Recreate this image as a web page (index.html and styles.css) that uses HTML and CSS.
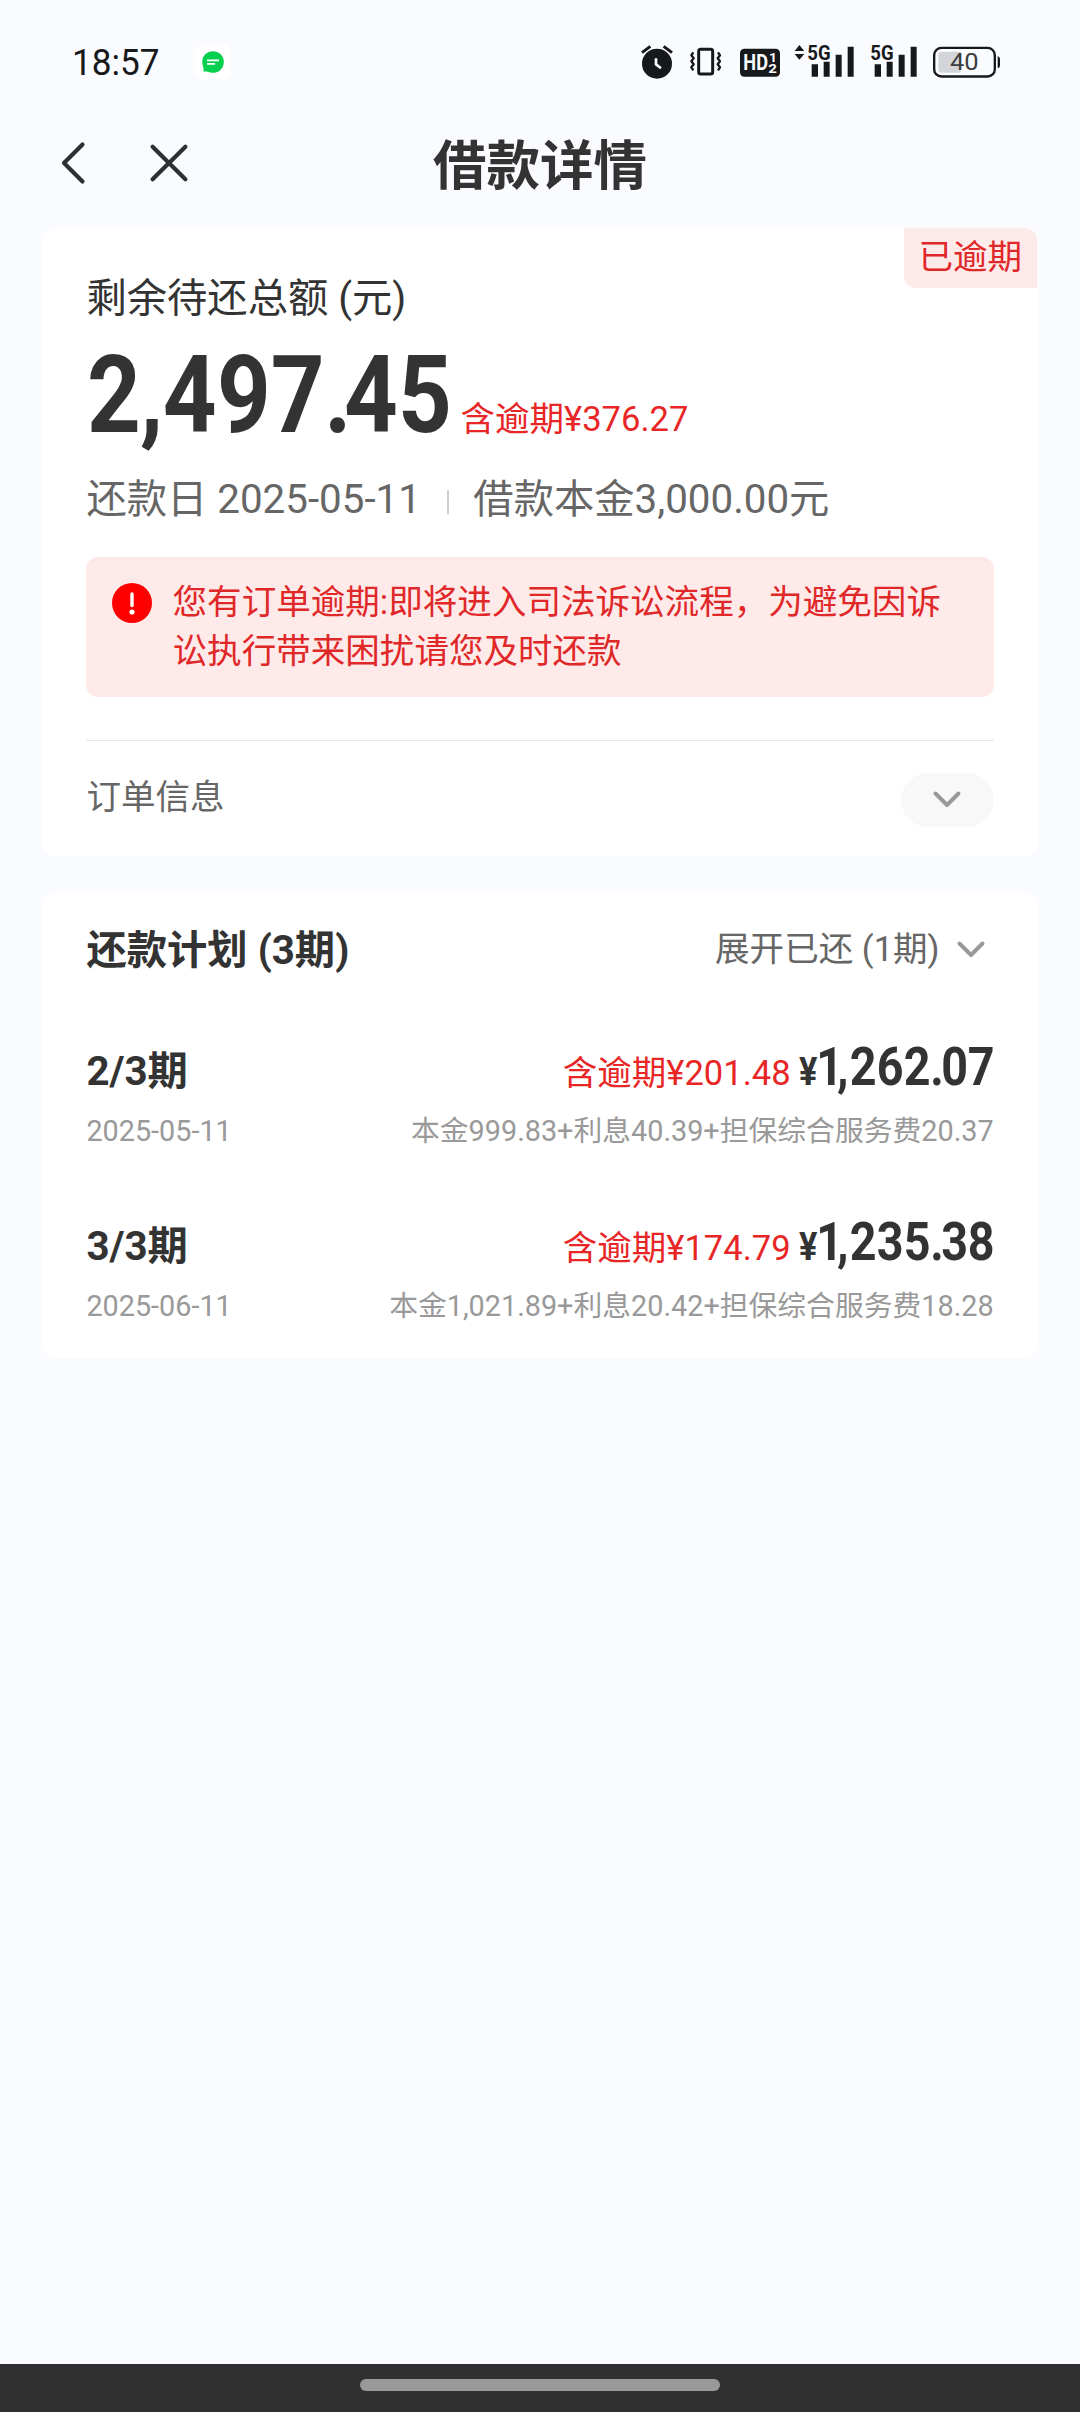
FILE: index.html
```html
<!DOCTYPE html>
<html lang="zh-CN">
<head>
<meta charset="utf-8">
<title>借款详情</title>
<link rel="stylesheet" href="styles.css">
</head>
<body>
<div class="screen">
  <header class="status-bar">
    <svg class="clock" viewBox="0 0 90 36"><text x="0" y="31" textLength="87.500" lengthAdjust="spacingAndGlyphs">18:57</text></svg>
    <svg class="chat" viewBox="0 0 36 36">
      <rect x="0.5" y="0.5" width="35" height="35" rx="6" fill="#fff"/>
      <circle cx="18" cy="18" r="10.800" fill="#08d04f"/>
      <path d="M8.500 19v8.500h9z" fill="#08d04f"/>
      <path d="M12 16.300h12M12 19.800h8" stroke="#fff" stroke-width="1.800"/>
    </svg>
    <div class="status-icons">
      <svg class="ic-alarm" viewBox="60 70 102 110">
        <circle cx="111" cy="132" r="45"/>
        <path d="M66 99l25-19M156 99l-25-19" class="line8"/>
        <path d="M108 116v18l15 12" class="cut"/>
      </svg>
      <svg class="ic-vibrate" viewBox="207 70 99 110">
        <rect x="236" y="89" width="42" height="74" rx="6" class="line9"/>
        <path d="M220 98l-6 9 7 9-7 9 7 9-7 9 6 9M294 98l6 9-7 9 7 9-7 9 7 9-6 9" class="line7"/>
      </svg>
      <svg class="ic-hd" viewBox="360 70 120 110">
        <rect x="360" y="87" width="120" height="84" rx="13"/>
        <text x="370" y="152" font-size="66" textLength="74" lengthAdjust="spacingAndGlyphs" class="light">HD</text>
        <text x="447" y="126" font-size="38" textLength="24" lengthAdjust="spacingAndGlyphs" class="light">1</text>
        <text x="445" y="161" font-size="40" textLength="26" lengthAdjust="spacingAndGlyphs" class="light">2</text>
      </svg>
      <svg class="ic-signal-a" viewBox="522 70 183 110">
        <path d="M524 94l14-18 15 18zM524 103l14 17 15-17z"/>
        <text x="562" y="120" font-size="62" textLength="70" lengthAdjust="spacingAndGlyphs">5G</text>
        <path d="M575 134h19v37h-19zM611 126h18v45h-18zM647 105h18v66h-18zM683 81h18v90h-18z"/>
      </svg>
      <svg class="ic-signal-b" viewBox="750 70 144 110">
        <text x="751" y="120" font-size="62" textLength="70" lengthAdjust="spacingAndGlyphs">5G</text>
        <path d="M764 134h19v37h-19zM800 126h18v45h-18zM836 105h18v66h-18zM872 81h18v90h-18z"/>
      </svg>
      <svg class="ic-battery" viewBox="936 70 207 110">
        <path d="M1022 96v63h-56q-11 0-11-11v-41q0-11 11-11z" fill="#d4d5d8"/>
        <rect x="942.500" y="84.500" width="182" height="86" rx="22" fill="none" stroke="#17181a" stroke-width="7"/>
        <path d="M1133 109q7 3 7 9v20q0 6-7 8z"/>
        <text x="990" y="152" font-size="72" textLength="86" lengthAdjust="spacingAndGlyphs" class="level">40</text>
      </svg>
    </div>
  </header>

  <nav class="nav-bar">
    <svg class="nav-back" viewBox="0 0 26 46"><path d="M21.500 4.500L3 23l18.500 18.500"/></svg>
    <svg class="nav-close" viewBox="0 0 38 38"><path d="M2.600 2.800l32.800 32.400M35.400 2.800L2.600 35.200"/></svg>
    <h1 class="nav-title">借款详情</h1>
  </nav>

  <main class="content">
    <section class="card summary">
      <span class="tag">已逾期</span>
      <div class="label">剩余待还总额 (元)</div>
      <div class="total">
        <svg class="total-value" width="374" height="103"><text transform="translate(1 104) scale(.877 1)" font-size="107" x="0 60.500 86.500 148.300 209.500 270.500 293 354.500">2,497.45</text></svg>
        <span class="overdue">含逾期¥376.27</span>
      </div>
      <div class="meta"><span>还款日 2025-05-11</span><i class="sep"></i><span>借款本金3,000.00元</span></div>
      <div class="notice">
        <svg class="notice-icon" viewBox="0 0 40 40"><circle cx="20" cy="20" r="20"/><path d="M20 11v11.500"/><circle cx="20" cy="29" r="2.600" class="dot"/></svg>
        <p>您有订单逾期:即将进入司法诉讼流程，为避免因诉<br>讼执行带来困扰请您及时还款</p>
      </div>
      <div class="order">
        <span>订单信息</span>
        <span class="pill"><svg class="chevron" viewBox="0 0 28 18"><path d="M2.500 2.500L14 14l11.500-11.500"/></svg></span>
      </div>
    </section>

    <section class="card plan">
      <div class="plan-head">
        <h2>还款计划 (3期)</h2>
        <span class="expand">展开已还 (1期)<svg class="chevron" viewBox="0 0 28 18"><path d="M2.500 2.500L14 14l11.500-11.500"/></svg></span>
      </div>
      <div class="item">
        <div class="row main"><strong>2/3期</strong><span class="overdue">含逾期¥201.48</span><svg class="price" width="196" height="40"><text transform="translate(1 40) scale(.88 1)" font-size="39">¥</text><text transform="translate(-1.500 40) scale(.88 1)" font-size="53" x="22.500 46 60.500 91.200 122 152 164.500 194.500">1,262.07</text></svg></div>
        <div class="row sub"><span>2025-05-11</span><span>本金999.83+利息40.39+担保综合服务费20.37</span></div>
      </div>
      <div class="item">
        <div class="row main"><strong>3/3期</strong><span class="overdue">含逾期¥174.79</span><svg class="price" width="196" height="40"><text transform="translate(1 40) scale(.88 1)" font-size="39">¥</text><text transform="translate(-1.500 40) scale(.88 1)" font-size="53" x="22.500 46 60.500 91.200 122 152 164.500 194.500">1,235.38</text></svg></div>
        <div class="row sub"><span>2025-06-11</span><span>本金1,021.89+利息20.42+担保综合服务费18.28</span></div>
      </div>
    </section>
  </main>

  <footer class="gesture-bar"><span></span></footer>
</div>
</body>
</html>
```

FILE: styles.css
```css
* { box-sizing: border-box; margin: 0; padding: 0; }
body {
  background: #fafbff;
  color: #333;
  font-family: Roboto, "Noto Sans CJK SC", sans-serif;
}
svg { display: block; flex: none; overflow: visible; }
.screen { width: 1080px; height: 2412px; display: flex; flex-direction: column; }

.status-bar { height: 124px; display: flex; padding: 44px 79.500px 0 72px; fill: #17181a; }
.clock { width: 90px; height: 36px; font-size: 37px; }
.chat { width: 36px; height: 36px; margin-left: 33px; }
.status-icons { display: flex; margin-left: auto; }
.status-icons svg { height: 36.67px; margin-top: -0.67px; }
.status-icons text { font-weight: 700; }
.status-icons .light { fill: #fafbff; }
.status-icons .level { font-weight: 400; fill: #3c3d40; }
.ic-alarm { width: 34px; }
.ic-vibrate { width: 33px; margin-left: 15px; }
.ic-hd { width: 40px; margin-left: 18px; }
.ic-signal-a { width: 61px; margin-left: 14px; }
.ic-signal-b { width: 48px; margin-left: 15px; }
.ic-battery { width: 69px; margin-left: 14px; }
.line7, .line8, .line9 { fill: none; stroke: #17181a; stroke-linejoin: round; }
.line7 { stroke-width: 7; }
.line8 { stroke-width: 9; }
.line9 { stroke-width: 9; }
.cut { fill: none; stroke: #fafbff; stroke-width: 8; }

.nav-bar { height: 104px; display: flex; align-items: flex-start; padding-left: 61px; }
.nav-bar path { fill: none; stroke: #2e2f31; stroke-width: 4.2; stroke-linecap: round; stroke-linejoin: round; }
.nav-back { width: 26px; height: 46px; margin-top: 16px; }
.nav-close { width: 38px; height: 38px; margin: 20px 0 0 63px; }
.nav-title { margin-left: 245px; font-size: 53.5px; line-height: 85px; font-weight: 700; }

.content { flex: 1; display: flex; flex-direction: column; gap: 36px; padding: 0 43.2px; }
.card { background: #fff; border-radius: 12px; padding: 0 43.2px; }
.overdue { font-size: 34.56px; color: #e82626; }

.summary { position: relative; height: 628px; padding-top: 43px; overflow: hidden; }
.tag {
  position: absolute; top: 0; right: 0;
  width: 133px; height: 60px;
  border-radius: 0 12px 0 12px;
  background: #ffeaea; color: #e02828;
  font-size: 34.56px; line-height: 59px; text-align: center;
}
.label { font-size: 40.32px; line-height: 56px; height: 57px; }
.total { display: flex; align-items: baseline; height: 144px; }
.total text, .price text { font-weight: 700; fill: #333; }
.total .overdue { line-height: 1; }
.meta { display: flex; align-items: center; height: 53.4px; padding-top: 1px; font-size: 40.32px; line-height: 53.4px; color: #666; }
.sep { width: 2px; height: 24px; margin: 5px 24.5px 0 26px; background: #d0d0d0; }
.notice {
  display: flex; height: 140px; margin-top: 31.6px; padding: 20.8px 0 0 25.9px;
  border-radius: 12px; background: #ffeaea; color: #e02828;
  font-size: 34.56px; line-height: 48.96px;
}
.notice-icon { width: 40px; height: 40px; margin: 5px 20.3px 0 0; fill: #f00; }
.notice-icon path { stroke: #fff; stroke-width: 3.4; stroke-linecap: round; }
.notice-icon .dot { fill: #fff; }
.order {
  display: flex; justify-content: space-between; margin-top: 43px; padding-top: 32px;
  border-top: 1px solid #e8e8e8; color: #666; font-size: 34.56px; line-height: 49px;
}
.pill { width: 93px; height: 54px; border-radius: 27px; background: #f8f8f8; display: flex; justify-content: center; align-items: center; }
.chevron { width: 28px; height: 18px; }
.chevron path { fill: none; stroke: #999; stroke-width: 4; stroke-linecap: round; stroke-linejoin: round; }

.plan { height: 466px; }
.plan-head { display: flex; justify-content: space-between; height: 118px; line-height: 117px; }
.plan-head h2 { font-size: 40.32px; font-weight: 700; }
.expand { display: flex; font-size: 34.56px; line-height: 115px; color: #666; }
.expand .chevron { margin: 49px 9px 0 17px; }
.item { height: 175px; padding-top: 33.5px; }
.row { display: flex; }
.main { height: 56px; align-items: baseline; line-height: 56px; }
.main strong { font-size: 40.32px; font-weight: 700; margin-right: auto; }
.price { margin-left: 7px; }
.sub { justify-content: space-between; margin-top: 7px; font-size: 28.8px; line-height: 48px; color: #999; }

.gesture-bar { height: 48px; background: #303030; display: flex; justify-content: center; padding-top: 15px; }
.gesture-bar span { width: 360px; height: 12px; border-radius: 6px; background: #999; }
```
